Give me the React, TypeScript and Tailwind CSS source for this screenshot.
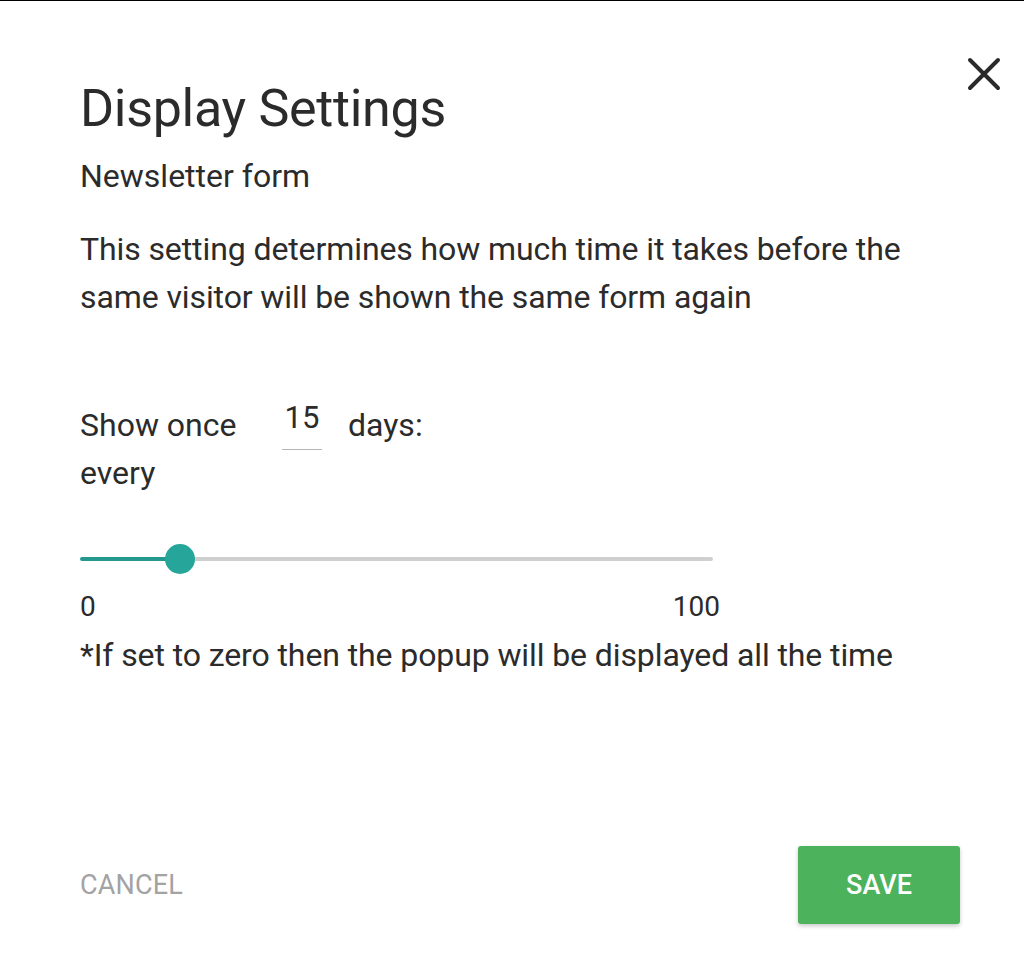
import { useState } from "react";

const MIN = 0;
const MAX = 100;

export default function App() {
  const [days, setDays] = useState(15);
  const pct = ((days - MIN) / (MAX - MIN)) * 100;

  return (
    <div className="relative h-[964px] w-[1024px] overflow-hidden border-t border-black bg-white font-['Roboto',sans-serif] text-[#2b2b2b]">
      <button
        type="button"
        aria-label="Close"
        className="absolute right-[22px] top-[55px] flex h-[36px] w-[36px] items-center justify-center"
      >
        <svg width="36" height="36" viewBox="0 0 36 36" fill="none" stroke="#2a2a2a" strokeWidth="4" strokeLinecap="round">
          <path d="M4 4L32 32M32 4L4 32" />
        </svg>
      </button>

      <div className="flex h-full flex-col pl-[80px] pr-[64px]">
        <h1 className="mt-[76px] text-[52px] leading-[64px] font-normal tracking-[-0.3px]">Display Settings</h1>
        <p className="mt-[15px] text-[32px] leading-[40px]">Newsletter form</p>
        <p className="mt-[29px] max-w-[860px] text-[32px] leading-[48px] tracking-[-0.1px]">
          This setting determines how much time it takes before the same visitor will be shown the same form again
        </p>

        <div className="mt-[80px] flex items-start">
          <div className="w-[170px] text-[32px] leading-[48px]">Show once every</div>
          <div className="ml-[32px] flex w-[40px] flex-col items-center">
            <input
              value={days}
              onChange={(e) => setDays(Math.max(MIN, Math.min(MAX, Number(e.target.value) || 0)))}
              className="box-border h-[49px] w-[40px] border-b border-[#b5b5b5] bg-transparent pb-[16px] text-center text-[31px] leading-[32px] outline-none"
            />
          </div>
          <div className="ml-[26px] text-[32px] leading-[48px]">days:</div>
        </div>

        <div className="relative mt-[47px] h-[30px] w-[633px]">
          <div className="absolute left-0 right-0 top-[13px] flex h-[4px] overflow-hidden rounded-full">
            <div className="h-full bg-[#23998d]" style={{ width: `calc(${pct}% + 5px)` }} />
            <div className="h-full flex-1 bg-[#cfcfcf]" />
          </div>
          <div
            className="absolute top-0 h-[30px] w-[30px] -translate-x-1/2 rounded-full bg-[#26a69a]"
            style={{ left: `calc(${pct}% + 5px)` }}
          />
        </div>

        <div className="mt-[17px] flex w-[640px] justify-between text-[28px] leading-[32px]">
          <span>0</span>
          <span>100</span>
        </div>
        <p className="mt-[12px] text-[32px] leading-[40px] tracking-[-0.1px]">
          *If set to zero then the popup will be displayed all the time
        </p>

        <div className="mt-auto mb-[40px] flex items-center justify-between">
          <button type="button" className="text-[27px] leading-[32px] tracking-[0.2px] text-[#a3a3a3]">
            CANCEL
          </button>
          <button
            type="button"
            className="h-[78px] w-[162px] rounded-[3px] bg-[#4cb25c] text-[27px] font-medium text-white shadow-[0_2px_4px_rgba(0,0,0,0.22)]"
          >
            SAVE
          </button>
        </div>
      </div>
    </div>
  );
}
